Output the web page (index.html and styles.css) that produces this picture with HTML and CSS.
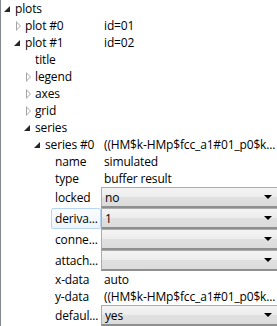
FILE: index.html
```html
<!DOCTYPE html>
<html lang="en">
<head>
    <meta charset="UTF-8">
    <title>Plot properties</title>
    <link rel="stylesheet" href="styles.css">
</head>
<body>
    <div class="tree">
        <div class="row d0"><div class="name"><span class="tog open"></span><span class="label">plots</span></div><div class="value"></div></div>
        <div class="row d1"><div class="name"><span class="tog closed"></span><span class="label">plot #0</span></div><div class="value">id=01</div></div>
        <div class="row d1"><div class="name"><span class="tog open"></span><span class="label">plot #1</span></div><div class="value">id=02</div></div>
        <div class="row d2"><div class="name"><span class="tog"></span><span class="label">title</span></div><div class="value"></div></div>
        <div class="row d2"><div class="name"><span class="tog closed"></span><span class="label">legend</span></div><div class="value"></div></div>
        <div class="row d2"><div class="name"><span class="tog closed"></span><span class="label">axes</span></div><div class="value"></div></div>
        <div class="row d2"><div class="name"><span class="tog closed"></span><span class="label">grid</span></div><div class="value"></div></div>
        <div class="row d2"><div class="name"><span class="tog open"></span><span class="label">series</span></div><div class="value"></div></div>
        <div class="row d3"><div class="name"><span class="tog open"></span><span class="label">series #0</span></div><div class="value">((HM$k-HMp$fcc_a1#01_p0$k...</div></div>
        <div class="row d4"><div class="name"><span class="tog"></span><span class="label">name</span></div><div class="value">simulated</div></div>
        <div class="row d4"><div class="name"><span class="tog"></span><span class="label">type</span></div><div class="value">buffer result</div></div>
        <div class="row d4 tall"><div class="name"><span class="tog"></span><span class="label">locked</span></div><div class="value"><div class="combo"><span>no</span><i class="arrow"></i></div></div></div>
        <div class="row d4 tall"><div class="name"><span class="tog"></span><span class="label hl">deriva...</span></div><div class="value"><div class="combo"><span>1</span><i class="arrow"></i></div></div></div>
        <div class="row d4 tall"><div class="name"><span class="tog"></span><span class="label">conne...</span></div><div class="value"><div class="combo"><span></span><i class="arrow"></i></div></div></div>
        <div class="row d4 tall"><div class="name"><span class="tog"></span><span class="label">attach...</span></div><div class="value"><div class="combo"><span></span><i class="arrow"></i></div></div></div>
        <div class="row d4"><div class="name"><span class="tog"></span><span class="label">x-data</span></div><div class="value">auto</div></div>
        <div class="row d4"><div class="name"><span class="tog"></span><span class="label">y-data</span></div><div class="value">((HM$k-HMp$fcc_a1#01_p0$k...</div></div>
        <div class="row d4 tall"><div class="name"><span class="tog"></span><span class="label">defaul...</span></div><div class="value"><div class="combo"><span>yes</span><i class="arrow"></i></div></div></div>
    </div>
</body>
</html>
```

FILE: styles.css
```css
* {
    margin: 0;
    padding: 0;
    box-sizing: border-box;
}

body {
    background: #fff;
    font-family: 'Open Sans', sans-serif;
    font-size: 12px;
    letter-spacing: -0.15px;
    color: #000;
    width: 277px;
    height: 326px;
    overflow: hidden;
}

/* Tree */
.tree {
    border-left: 1px solid #828790;
    height: 326px;
}

.row {
    display: flex;
    height: 17px;
    align-items: stretch;
}

.row.tall {
    height: 21px;
}

.name {
    width: 100px;
    flex-shrink: 0;
    display: flex;
    align-items: stretch;
    white-space: nowrap;
}

.d0 .name { padding-left: 0; }
.d1 .name { padding-left: 10px; }
.d2 .name { padding-left: 20px; }
.d3 .name { padding-left: 30px; }
.d4 .name { padding-left: 40px; }

.tog {
    width: 10px;
    flex-shrink: 0;
    position: relative;
}

/* expanded: filled corner triangle */
.tog.open::after {
    content: "";
    position: absolute;
    left: 3px;
    top: 50%;
    margin-top: -3px;
    width: 0;
    height: 0;
    border-left: 6px solid transparent;
    border-bottom: 6px solid #262626;
}

/* collapsed: hollow arrow */
.tog.closed::before {
    content: "";
    position: absolute;
    left: 5px;
    top: 50%;
    margin-top: -5px;
    border-top: 5px solid transparent;
    border-bottom: 5px solid transparent;
    border-left: 5px solid #a6a6a6;
}

.tog.closed::after {
    content: "";
    position: absolute;
    left: 6px;
    top: 50%;
    margin-top: -3px;
    border-top: 3px solid transparent;
    border-bottom: 3px solid transparent;
    border-left: 3px solid #fff;
}

.label {
    flex: 1;
    display: flex;
    align-items: center;
    padding-left: 3px;
    border: 1px solid transparent;
}

.label.hl {
    border-color: #b8d6f3;
    border-radius: 2px;
    background: linear-gradient(#fafcfe, #eef5fc);
}

.value {
    flex: 1;
    display: flex;
    align-items: center;
    padding-left: 3px;
    white-space: nowrap;
    overflow: hidden;
}

.value:has(.combo) {
    padding-left: 0;
    align-items: stretch;
}

/* Combo box */
.combo {
    flex: 1;
    display: flex;
    align-items: center;
    justify-content: space-between;
    padding: 0 5px 0 3px;
    border: 1px solid #acacac;
    border-bottom: 2px solid #8e8f8f;
    border-right: none;
    background: linear-gradient(#f4f4f4 0%, #ececec 50%, #e0e0e0 51%, #dcdcdc 100%);
}

.arrow {
    width: 0;
    height: 0;
    border-left: 4px solid transparent;
    border-right: 4px solid transparent;
    border-top: 4px solid #000;
}
```
